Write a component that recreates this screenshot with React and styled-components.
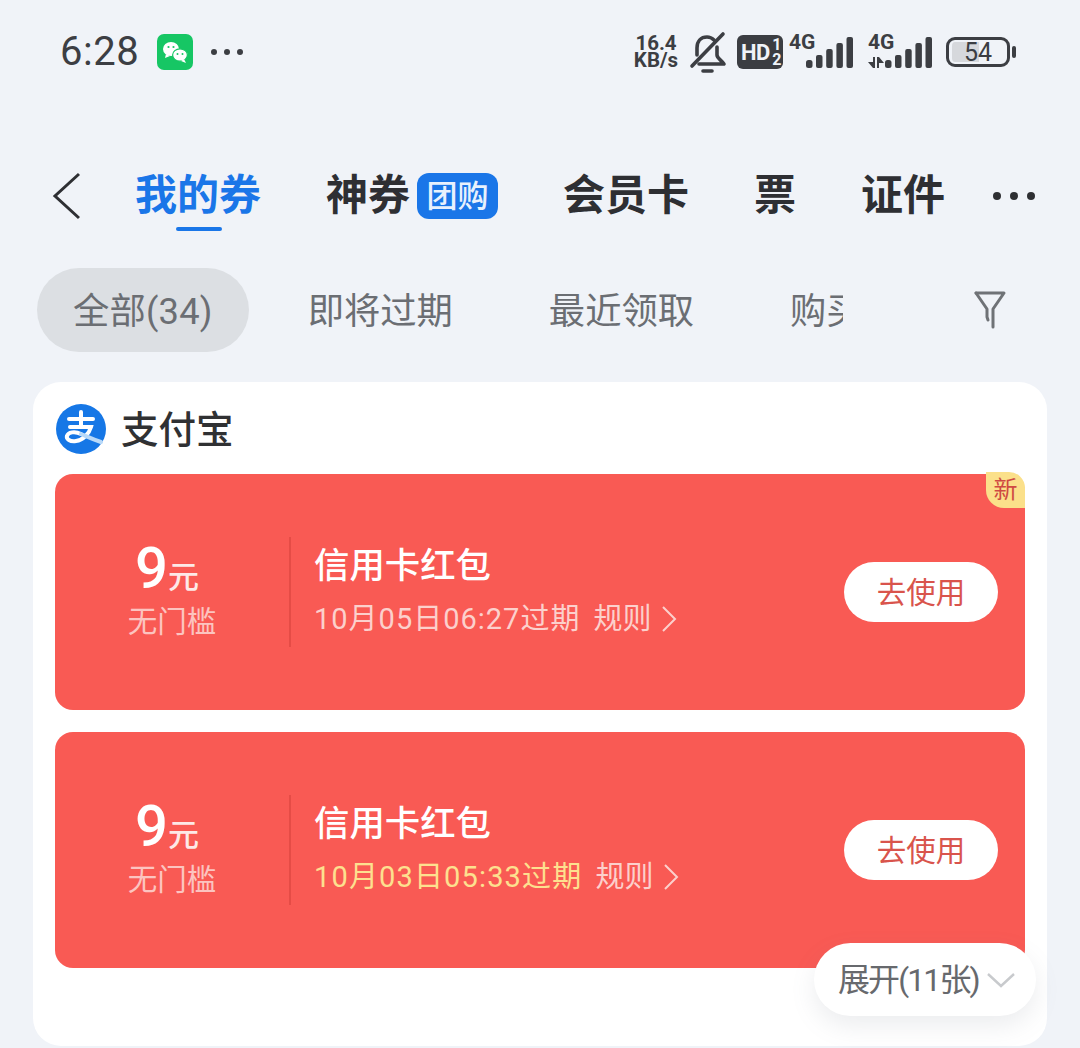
import React from "react";
import styled, { createGlobalStyle } from "styled-components";

const Global = createGlobalStyle`
  html, body { margin: 0; padding: 0; background: #f0f3f8; height: 1048px; overflow: hidden; }
  * { box-sizing: border-box; }
  body { font-family: Roboto, "Noto Sans CJK SC", sans-serif; }
`;

const Page = styled.div`
  position: relative;
  width: 1080px;
  height: 1048px;
  background: #f0f3f8;
  overflow: hidden;
`;

const StatusBar = styled.div`
  display: flex;
  align-items: center;
  height: 104px;
  padding: 0 70px 0 60px;
  color: #3c3e43;
`;
const Time = styled.span`
  font-size: 40px;
  font-weight: 400;
  letter-spacing: 0.5px;
  line-height: 1;
`;
const AppIcon = styled.svg`
  width: 36px;
  height: 36px;
  margin-left: 18px;
  flex: none;
`;
const StatusDots = styled.svg`
  width: 32px;
  height: 8px;
  margin-left: 18px;
`;
const StatusRight = styled.div`
  display: flex;
  align-items: center;
  margin-left: auto;
`;
const Speed = styled.div`
  display: flex;
  flex-direction: column;
  align-items: center;
  width: 48px;
  font-size: 20.5px;
  font-weight: 700;
  line-height: 17px;
`;
const Bell = styled.svg`
  width: 38px;
  height: 42px;
  margin-left: 9px;
`;
const HdBadge = styled.div`
  display: flex;
  align-items: center;
  justify-content: space-between;
  width: 46px;
  height: 34px;
  margin-left: 10px;
  padding: 0 2px 0 4px;
  border-radius: 6px;
  background: #3b3d42;
  color: #f0f3f8;
  font-size: 22px;
  font-weight: 700;
  letter-spacing: -0.5px;
`;
const HdStack = styled.span`
  display: flex;
  flex-direction: column;
  font-size: 16px;
  line-height: 15px;
  align-items: center;
`;
const Signal = styled.div`
  position: relative;
  width: 64px;
  height: 36px;
  margin-left: ${(p) => p.$ml}px;
`;
const SignalLabel = styled.span`
  position: absolute;
  left: 0;
  top: -3px;
  font-size: 21px;
  font-weight: 700;
  line-height: 22px;
`;
const SignalBars = styled.svg`
  display: block;
  width: 100%;
  height: 36px;
`;
const Battery = styled.div`
  position: relative;
  display: flex;
  align-items: center;
  justify-content: center;
  width: 64px;
  height: 30px;
  margin-left: 14px;
  padding: 2px 3px;
  border: 3px solid #3c3e43;
  border-radius: 9px;
  font-size: 25px;
  line-height: 1;
  background: linear-gradient(90deg, #d6d8dc 0 52%, transparent 52%);
  background-clip: content-box;
  &::after {
    content: "";
    position: absolute;
    right: -9px;
    top: 6px;
    width: 4px;
    height: 12px;
    border-radius: 2px;
    background: #3c3e43;
  }
`;

const Nav = styled.div`
  display: flex;
  align-items: center;
  height: 60px;
  margin-top: 62px;
  padding-left: 52px;
`;
const Back = styled.svg`
  width: 28px;
  height: 48px;
  margin-right: 55px;
  flex: none;
`;
const Tabs = styled.div`
  display: flex;
  align-items: center;
  gap: 65px;
`;
const Tab = styled.div`
  position: relative;
  display: flex;
  align-items: center;
  gap: 7px;
  font-size: 42px;
  font-weight: 700;
  line-height: 60px;
  white-space: nowrap;
  color: ${(p) => (p.$active ? "#1a76e8" : "#2e2f33")};
  ${(p) =>
    p.$active &&
    `&::after {
      content: "";
      position: absolute;
      left: 41px;
      bottom: -5px;
      width: 46px;
      height: 4px;
      border-radius: 2px;
      background: #1a76e8;
    }`}
`;
const TabBadge = styled.span`
  display: flex;
  align-items: center;
  justify-content: center;
  width: 81px;
  height: 46px;
  border-radius: 12px;
  background: #1a76e8;
  color: #e8f1fd;
  font-size: 31px;
  font-weight: 500;
  line-height: 1;
`;
const More = styled.svg`
  width: 42px;
  height: 10px;
  margin-left: 48px;
  flex: none;
`;

const Filters = styled.div`
  display: flex;
  align-items: center;
  margin-top: 42px;
  padding-left: 37px;
`;
const FilterScroll = styled.div`
  display: flex;
  gap: 22px;
  width: 806px;
  overflow: hidden;
  flex: none;
`;
const Chip = styled.div`
  display: flex;
  align-items: center;
  flex: none;
  height: 84px;
  padding: 0 ${(p) => (p.$active ? "36px" : "37px")} 5px;
  border-radius: 42px;
  font-size: 36.3px;
  letter-spacing: ${(p) => (p.$active ? "0.2px" : "0")};
  white-space: nowrap;
  color: #6b6e73;
  background: ${(p) => (p.$active ? "#dcdfe3" : "transparent")};
`;
const FilterIcon = styled.svg`
  width: 34px;
  height: 40px;
  margin-left: 130px;
  flex: none;
`;

const Card = styled.div`
  position: relative;
  display: flex;
  flex-direction: column;
  gap: 22px;
  width: 1014px;
  height: 664px;
  margin: 30px 0 0 33px;
  padding: 22px;
  background: #fff;
  border-radius: 28px;
`;
const CardHeader = styled.div`
  display: flex;
  align-items: center;
  gap: 15px;
  height: 50px;
  margin-bottom: -2px;
  font-size: 37.5px;
  font-weight: 500;
  color: #303133;
`;
const HeaderText = styled.span`
  margin-top: -6px;
`;
const Logo = styled.svg`
  width: 50px;
  height: 50px;
  margin-left: 1px;
  flex: none;
`;
const Coupon = styled.div`
  position: relative;
  display: flex;
  align-items: center;
  width: 970px;
  height: 236px;
  background: #f95a54;
  border-radius: 18px;
`;
const Worth = styled.div`
  display: flex;
  flex-direction: column;
  align-items: center;
  width: 234px;
  flex: none;
  color: #fff;
`;
const Amount = styled.div`
  display: flex;
  align-items: baseline;
  height: 58px;
  margin-top: -6px;
  margin-right: 10px;
  font-size: 58px;
  font-weight: 500;
  line-height: 58px;
`;
const Unit = styled.span`
  font-size: 31px;
  font-weight: 500;
  color: #fde9e7;
`;
const Threshold = styled.div`
  margin-top: 7px;
  font-size: 29.5px;
  line-height: 36px;
  color: #fcc4c0;
`;
const Divider = styled.div`
  width: 2px;
  height: 110px;
  background: #e54c46;
  flex: none;
`;
const Info = styled.div`
  display: flex;
  flex-direction: column;
  gap: 13px;
  margin-left: 23px;
  margin-top: -4px;
`;
const Title = styled.div`
  font-size: 35.4px;
  font-weight: 500;
  line-height: 44px;
  color: #fff;
`;
const Meta = styled.div`
  display: flex;
  align-items: center;
  font-size: 29px;
  line-height: 36px;
  white-space: nowrap;
  color: #fcd0cc;
`;
const Expiry = styled.span`
  letter-spacing: ${(p) => (p.$soon ? "1.15px" : "1px")};
  color: ${(p) => (p.$soon ? "#fde08f" : "#fcd0cc")};
`;
const Rule = styled.span`
  margin-left: 13px;
`;
const RuleArrow = styled.svg`
  width: 16px;
  height: 28px;
  margin-left: 10px;
`;
const UseButton = styled.div`
  display: flex;
  align-items: center;
  justify-content: center;
  width: 154px;
  height: 60px;
  margin-left: auto;
  margin-right: 27px;
  padding-bottom: 5px;
  border-radius: 30px;
  background: #fff;
  font-size: 29.5px;
  color: #d9544c;
`;
const NewTag = styled.div`
  position: absolute;
  top: -2px;
  right: 0;
  display: flex;
  align-items: center;
  justify-content: center;
  width: 39px;
  height: 36px;
  border-radius: 0 16px 0 18px;
  background: #fbe08a;
  font-size: 24px;
  line-height: 1;
  color: #cf4a42;
`;
const Expand = styled.div`
  position: absolute;
  left: 781px;
  top: 561px;
  display: flex;
  align-items: center;
  width: 222px;
  height: 73px;
  padding: 0 0 0 24px;
  border-radius: 37px;
  background: #fff;
  box-shadow: 0 10px 24px rgba(120, 125, 140, 0.14);
  white-space: nowrap;
`;
const ExpandLabel = styled.span`
  margin-top: -5px;
  font-size: 32px;
  letter-spacing: -1.9px;
  color: #67696d;
`;
const ExpandArrow = styled.svg`
  width: 28px;
  height: 16px;
  margin-left: 8px;
  flex: none;
`;

const Bars = ({ withArrows }) => (
  <SignalBars viewBox="0 0 64 36">
    {withArrows && (
      <path fill="#3c3e43" d="M0 28h5v-5h2v11H5zM9 23h2l5 6h-5v5H9z" />
    )}
    <g fill="#3c3e43">
      <rect x="17" y="26" width="6.5" height="8" rx="2.5" />
      <rect x="27" y="21" width="6.5" height="13" rx="2" />
      <rect x="37.2" y="15" width="6.5" height="19" rx="2" />
      <rect x="47.4" y="9" width="6.5" height="25" rx="2" />
      <rect x="57.5" y="3" width="6.5" height="31" rx="2" />
    </g>
  </SignalBars>
);

const Ticket = ({ date, soon, isNew }) => (
  <Coupon>
    {isNew && <NewTag>新</NewTag>}
    <Worth>
      <Amount>
        9<Unit>元</Unit>
      </Amount>
      <Threshold>无门槛</Threshold>
    </Worth>
    <Divider />
    <Info>
      <Title>信用卡红包</Title>
      <Meta>
        <Expiry $soon={soon}>{date}</Expiry>
        <Rule>规则</Rule>
        <RuleArrow viewBox="0 0 16 28" fill="none" stroke="#fcd0cc" strokeWidth="2">
          <path d="M2 2l12 12L2 26" />
        </RuleArrow>
      </Meta>
    </Info>
    <UseButton>去使用</UseButton>
  </Coupon>
);

export default function App() {
  return (
    <Page>
      <Global />
      <StatusBar>
        <Time>6:28</Time>
        <AppIcon viewBox="0 0 36 36">
          <rect width="36" height="36" rx="7" fill="#16c664" />
          <ellipse cx="14" cy="15" rx="8" ry="7" fill="#fff" />
          <path d="M9 20l-1 4 5-2z" fill="#fff" />
          <ellipse cx="23" cy="21" rx="7.4" ry="6.2" fill="#fff" stroke="#16c664" strokeWidth="1.2" />
          <path d="M27 25l2 4-5-2z" fill="#fff" />
          <circle cx="11.5" cy="13" r="1.1" fill="#16c664" />
          <circle cx="16.5" cy="13" r="1.1" fill="#16c664" />
          <circle cx="20.5" cy="20" r="1" fill="#16c664" />
          <circle cx="25.5" cy="20" r="1" fill="#16c664" />
        </AppIcon>
        <StatusDots viewBox="0 0 32 8" fill="#3c3e43">
          <circle cx="3" cy="4" r="3" />
          <circle cx="16" cy="4" r="3" />
          <circle cx="29" cy="4" r="3" />
        </StatusDots>
        <StatusRight>
          <Speed>
            <span>16.4</span>
            <span>KB/s</span>
          </Speed>
          <Bell viewBox="0 0 38 42" fill="none" stroke="#3c3e43" strokeWidth="3.6" strokeLinecap="round" strokeLinejoin="round">
            <path d="M8 24V17C8 10 12 6 18 6c3 0 5 1 7 3" />
            <path d="M28 16v8c0 3 4 5 7 9H10" />
            <path d="M3 35L34 3" />
            <path d="M14 40h9" />
          </Bell>
          <HdBadge>
            <span>HD</span>
            <HdStack>
              <span>1</span>
              <span>2</span>
            </HdStack>
          </HdBadge>
          <Signal $ml={6}>
            <SignalLabel>4G</SignalLabel>
            <Bars />
          </Signal>
          <Signal $ml={15}>
            <SignalLabel>4G</SignalLabel>
            <Bars withArrows />
          </Signal>
          <Battery>54</Battery>
        </StatusRight>
      </StatusBar>

      <Nav>
        <Back viewBox="0 0 28 48" fill="none" stroke="#2e2f33" strokeWidth="3">
          <path d="M27 2L3 24l24 22" />
        </Back>
        <Tabs>
          <Tab $active>我的券</Tab>
          <Tab>
            神券
            <TabBadge>团购</TabBadge>
          </Tab>
          <Tab>会员卡</Tab>
          <Tab>票</Tab>
          <Tab>证件</Tab>
        </Tabs>
        <More viewBox="0 0 42 10" fill="#2e2f33">
          <circle cx="4" cy="5" r="4" />
          <circle cx="21" cy="5" r="4" />
          <circle cx="38" cy="5" r="4" />
        </More>
      </Nav>

      <Filters>
        <FilterScroll>
          <Chip $active>全部(34)</Chip>
          <Chip>即将过期</Chip>
          <Chip>最近领取</Chip>
          <Chip>购买</Chip>
        </FilterScroll>
        <FilterIcon viewBox="0 0 34 40" fill="none" stroke="#6f7276" strokeWidth="3" strokeLinejoin="round" strokeLinecap="round">
          <path d="M3 3h28L20 19v18" />
          <path d="M3 3l11 16v8l1 3" />
        </FilterIcon>
      </Filters>

      <Card>
        <CardHeader>
          <Logo viewBox="0 0 50 50">
            <circle cx="25" cy="25" r="25" fill="#1677e6" />
            <g fill="none" stroke="#fff" strokeWidth="4" strokeLinecap="round">
              <path d="M13 15h24" />
              <path d="M25 8v14" />
              <path d="M14 23h21c-2 7-8 13-15 14-6 1-10-2-9-5 1-4 8-5 14-2" />
            </g>
            <path d="M25 30c5 2 11 5 20 8" fill="none" stroke="#b9d9f8" strokeWidth="4" strokeLinecap="round" />
          </Logo>
          <HeaderText>支付宝</HeaderText>
        </CardHeader>
        <Ticket date="10月05日06:27过期" isNew />
        <Ticket date="10月03日05:33过期" soon />
        <Expand>
          <ExpandLabel>展开(11张)</ExpandLabel>
          <ExpandArrow viewBox="0 0 28 16" fill="none" stroke="#c8cacd" strokeWidth="2.4">
            <path d="M1 2l13 12L27 2" />
          </ExpandArrow>
        </Expand>
      </Card>
    </Page>
  );
}
